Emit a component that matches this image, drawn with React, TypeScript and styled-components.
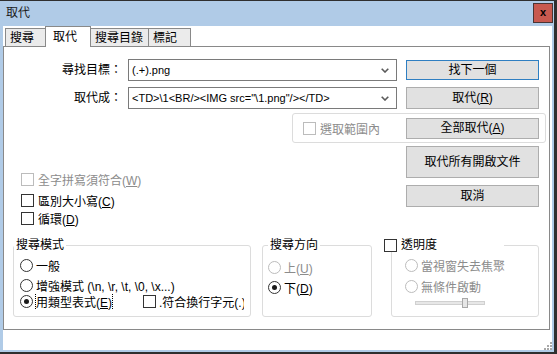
import React from "react";
import styled, { createGlobalStyle } from "styled-components";

const GlobalStyle = createGlobalStyle`
  html, body {
    margin: 0;
    padding: 0;
    background: #ffffff;
  }
  body {
    font-family: "Liberation Sans", "Noto Sans CJK TC", sans-serif;
    font-size: 12px;
    color: #000;
  }
  * {
    box-sizing: border-box;
  }
`;

const Window = styled.div`
  width: 557px;
  height: 354px;
  display: flex;
  padding: 1px 3px 2px 0;
  background: #2f2f2f;
`;

const Frame = styled.div`
  flex: 1;
  display: flex;
  flex-direction: column;
  background: #b0cbe7;
`;

const TitleBar = styled.div`
  height: 25px;
  display: flex;
  align-items: flex-start;
`;

const Title = styled.span`
  padding-left: 6px;
  line-height: 25px;
  font-size: 12px;
  color: #1b1b1b;
`;

const CloseButton = styled.div`
  margin: 2px 1px 0 auto;
  width: 20px;
  height: 20px;
  border: 1px solid #4a3434;
  background: #c8594f;
  display: flex;
  align-items: center;
  justify-content: center;
  font-size: 11px;
  font-weight: bold;
  line-height: 1;
  padding-bottom: 2px;
`;

const Client = styled.div`
  flex: 1;
  margin: 0 2px 2px 3px;
  background: #ffffff;
  display: flex;
  flex-direction: column;
`;

const TabStrip = styled.div`
  height: 20px;
  display: flex;
  align-items: flex-end;
  padding-left: 2px;
`;

const Tab = styled.div<{ $active?: boolean; $w: number }>`
  position: relative;
  z-index: ${(p) => (p.$active ? 1 : 0)};
  width: ${(p) => p.$w}px;
  height: ${(p) => (p.$active ? 21 : 18)}px;
  margin-bottom: ${(p) => (p.$active ? -1 : 0)}px;
  border: 1px solid #898989;
  border-bottom: none;
  background: ${(p) => (p.$active ? "#ffffff" : "#ebebeb")};
  padding-left: ${(p) => (p.$active ? 7 : 4)}px;
  padding-top: ${(p) => (p.$active ? 2 : 1)}px;
  line-height: 16px;
  white-space: nowrap;
  & + & {
    margin-left: -1px;
  }
`;

const Pane = styled.div`
  height: 284px;
  margin-right: 2px;
  border: 1px solid #898989;
  display: flex;
  flex-direction: column;
`;

const Footer = styled.div`
  flex: 1;
  display: flex;
  justify-content: flex-end;
  align-items: flex-end;
`;

const FieldRow = styled.div<{ $mt: number }>`
  display: flex;
  align-items: flex-start;
  margin-top: ${(p) => p.$mt}px;
`;

const FieldLabel = styled.div`
  width: 124px;
  padding-right: 6px;
  text-align: right;
  line-height: 22px;
  white-space: nowrap;
`;

const Combo = styled.div`
  width: 269px;
  height: 22px;
  border: 1px solid #7a7a7a;
  display: flex;
  align-items: center;
  padding: 0 7px 0 3px;
`;

const ComboValue = styled.span`
  flex: 1;
  font-size: 11px;
  white-space: nowrap;
  overflow: hidden;
`;

const Button = styled.button<{ $default?: boolean; $h?: number; $mt?: number }>`
  width: 133px;
  height: ${(p) => p.$h ?? 21}px;
  margin: ${(p) => p.$mt ?? 0}px 0 0 0;
  padding: 0;
  border: 1px solid ${(p) => (p.$default ? "#2f7fc2" : "#adadad")};
  background: #e1e1e1;
  font-family: inherit;
  font-size: 12px;
  color: #000;
  line-height: 1;
`;

const SideButton = styled(Button)`
  margin-left: 9px;
`;

const SelectionGroup = styled.div`
  align-self: flex-end;
  margin: 4px 3px 0 0;
  width: 254px;
  height: 30px;
  border: 1px solid #dcdcdc;
  border-radius: 3px;
  display: flex;
  align-items: center;
  justify-content: space-between;
  padding: 0 6px 0 10px;
`;

const Lower = styled.div`
  display: flex;
  justify-content: space-between;
`;

const CheckColumn = styled.div`
  display: flex;
  flex-direction: column;
  padding: 27px 0 0 17px;
`;

const ButtonColumn = styled.div`
  display: flex;
  flex-direction: column;
  gap: 7px;
  padding-top: 3px;
  margin-right: 10px;
`;

const CheckRow = styled.label<{ $mt?: number; $disabled?: boolean }>`
  display: flex;
  align-items: center;
  gap: 4px;
  height: 18px;
  margin-top: ${(p) => p.$mt ?? 0}px;
  color: ${(p) => (p.$disabled ? "#8c8c8c" : "#000")};
  white-space: nowrap;
`;

const Box = styled.span<{ $disabled?: boolean }>`
  flex: none;
  width: 13px;
  height: 13px;
  border: 1px solid ${(p) => (p.$disabled ? "#bcbcbc" : "#333333")};
  background: #ffffff;
`;

const BottomRow = styled.div`
  margin-top: auto;
  margin-bottom: 12px;
  display: flex;
  align-items: flex-end;
  padding-left: 9px;
`;

const GroupBox = styled.fieldset<{ $w: number; $ml?: number; $pl: number }>`
  width: ${(p) => p.$w}px;
  height: 79px;
  min-width: 0;
  margin: 0 0 0 ${(p) => p.$ml ?? 0}px;
  padding: 0 4px 0 ${(p) => p.$pl}px;
  border: 1px solid #dcdcdc;
  border-radius: 3px;
`;

const Legend = styled.legend<{ $ml: number; $w?: number }>`
  margin-left: ${(p) => p.$ml}px;
  padding: 0 2px;
  width: ${(p) => (p.$w ? `${p.$w}px` : "auto")};
  line-height: 14px;
  display: flex;
  align-items: center;
  gap: 4px;
  white-space: nowrap;
`;

const OptionRow = styled.div<{ $mt: number }>`
  display: flex;
  align-items: center;
  height: 16px;
  margin-top: ${(p) => p.$mt}px;
  white-space: nowrap;
`;

const OptionItem = styled.label<{ $w?: number; $disabled?: boolean }>`
  display: flex;
  align-items: center;
  gap: 3px;
  flex: none;
  width: ${(p) => (p.$w ? `${p.$w}px` : "auto")};
  overflow: hidden;
  color: ${(p) => (p.$disabled ? "#8c8c8c" : "#000")};
`;

const Radio = styled.span<{ $checked?: boolean; $disabled?: boolean }>`
  flex: none;
  width: 13px;
  height: 13px;
  border-radius: 50%;
  border: 1px solid ${(p) => (p.$disabled ? "#bcbcbc" : "#333333")};
  background: #ffffff;
  display: flex;
  align-items: center;
  justify-content: center;
  &::after {
    content: "";
    display: ${(p) => (p.$checked ? "block" : "none")};
    width: 5px;
    height: 5px;
    border-radius: 50%;
    background: #1a1a1a;
  }
`;

const Focused = styled.span`
  outline: 1px dotted #000;
  outline-offset: 0;
`;

const SliderRow = styled.div`
  height: 12px;
  margin-top: 3px;
  display: flex;
  align-items: center;
  padding-left: 10px;
`;

const SliderTrack = styled.div`
  position: relative;
  width: 70px;
  height: 4px;
  border: 1px solid #d0d0d0;
  background: #e7e7e7;
`;

const SliderThumb = styled.div`
  position: absolute;
  left: 46px;
  top: -4px;
  width: 6px;
  height: 10px;
  border: 1px solid #a8a8a8;
  background: #e6e6e6;
`;

const Key = styled.span`
  text-decoration: underline;
`;

const Chevron = () => (
  <svg width="8" height="5" viewBox="0 0 8 5">
    <polyline points="0.7,0.7 4,4 7.3,0.7" fill="none" stroke="#5a5a5a" strokeWidth="1.6" />
  </svg>
);

const SizeGrip = () => (
  <svg width="8" height="8" viewBox="0 0 8 8">
    {[
      [6, 0],
      [6, 3],
      [3, 3],
      [6, 6],
      [3, 6],
      [0, 6],
    ].map(([x, y], i) => (
      <rect key={i} x={x} y={y} width="2" height="2" fill="#a8a8a8" />
    ))}
  </svg>
);

const tabs = [
  { text: "搜尋", w: 41 },
  { text: "取代", w: 46, active: true },
  { text: "搜尋目錄", w: 59 },
  { text: "標記", w: 43 },
];

const App: React.FC = () => {
  return (
    <>
      <GlobalStyle />
      <Window>
        <Frame>
          <TitleBar>
            <Title>取代</Title>
            <CloseButton>x</CloseButton>
          </TitleBar>
          <Client>
            <TabStrip>
              {tabs.map((t) => (
                <Tab key={t.text} $w={t.w} $active={t.active}>
                  {t.text}
                </Tab>
              ))}
            </TabStrip>
            <Pane>
              <FieldRow $mt={12}>
                <FieldLabel>尋找目標：</FieldLabel>
                <Combo>
                  <ComboValue>(.+).png</ComboValue>
                  <Chevron />
                </Combo>
                <SideButton $default $mt={1} $h={20}>
                  找下一個
                </SideButton>
              </FieldRow>
              <FieldRow $mt={6}>
                <FieldLabel>取代成：</FieldLabel>
                <Combo>
                  <ComboValue>{'<TD>\\1<BR/><IMG src="\\1.png"/></TD>'}</ComboValue>
                  <Chevron />
                </Combo>
                <SideButton $h={22}>
                  取代(<Key>R</Key>)
                </SideButton>
              </FieldRow>
              <SelectionGroup>
                <CheckRow $disabled>
                  <Box $disabled />
                  <span>選取範圍內</span>
                </CheckRow>
                <Button>
                  全部取代(<Key>A</Key>)
                </Button>
              </SelectionGroup>
              <Lower>
                <CheckColumn>
                  <CheckRow $disabled>
                    <Box $disabled />
                    <span>
                      全字拼寫須符合(<Key>W</Key>)
                    </span>
                  </CheckRow>
                  <CheckRow $mt={3}>
                    <Box />
                    <span>
                      區別大小寫(<Key>C</Key>)
                    </span>
                  </CheckRow>
                  <CheckRow>
                    <Box />
                    <span>
                      循環(<Key>D</Key>)
                    </span>
                  </CheckRow>
                </CheckColumn>
                <ButtonColumn>
                  <Button $h={32}>取代所有開啟文件</Button>
                  <Button $h={22}>取消</Button>
                </ButtonColumn>
              </Lower>
              <BottomRow>
                <GroupBox $w={238} $pl={6}>
                  <Legend $ml={-6}>搜尋模式</Legend>
                  <OptionRow $mt={5}>
                    <OptionItem>
                      <Radio />
                      <span>一般</span>
                    </OptionItem>
                  </OptionRow>
                  <OptionRow $mt={4}>
                    <OptionItem>
                      <Radio />
                      <span>增強模式 (\n, \r, \t, \0, \x...)</span>
                    </OptionItem>
                  </OptionRow>
                  <OptionRow $mt={0}>
                    <OptionItem $w={123}>
                      <Radio $checked />
                      <Focused>
                        用類型表式(<Key>E</Key>)
                      </Focused>
                    </OptionItem>
                    <OptionItem $w={101}>
                      <Box />
                      <span>.符合換行字元(.)</span>
                    </OptionItem>
                  </OptionRow>
                </GroupBox>
                <GroupBox $w={110} $ml={11} $pl={5}>
                  <Legend $ml={0}>搜尋方向</Legend>
                  <OptionRow $mt={7}>
                    <OptionItem $disabled>
                      <Radio $disabled />
                      <span>
                        上(<Key>U</Key>)
                      </span>
                    </OptionItem>
                  </OptionRow>
                  <OptionRow $mt={4}>
                    <OptionItem>
                      <Radio $checked />
                      <span>
                        下(<Key>D</Key>)
                      </span>
                    </OptionItem>
                  </OptionRow>
                </GroupBox>
                <GroupBox $w={148} $ml={19} $pl={13}>
                  <Legend $ml={-23} $w={122}>
                    <Box />
                    <span>透明度</span>
                  </Legend>
                  <OptionRow $mt={5}>
                    <OptionItem $disabled>
                      <Radio $disabled />
                      <span>當視窗失去焦聚</span>
                    </OptionItem>
                  </OptionRow>
                  <OptionRow $mt={5}>
                    <OptionItem $disabled>
                      <Radio $disabled />
                      <span>無條件啟動</span>
                    </OptionItem>
                  </OptionRow>
                  <SliderRow>
                    <SliderTrack>
                      <SliderThumb />
                    </SliderTrack>
                  </SliderRow>
                </GroupBox>
              </BottomRow>
            </Pane>
            <Footer>
              <SizeGrip />
            </Footer>
          </Client>
        </Frame>
      </Window>
    </>
  );
};

export default App;
